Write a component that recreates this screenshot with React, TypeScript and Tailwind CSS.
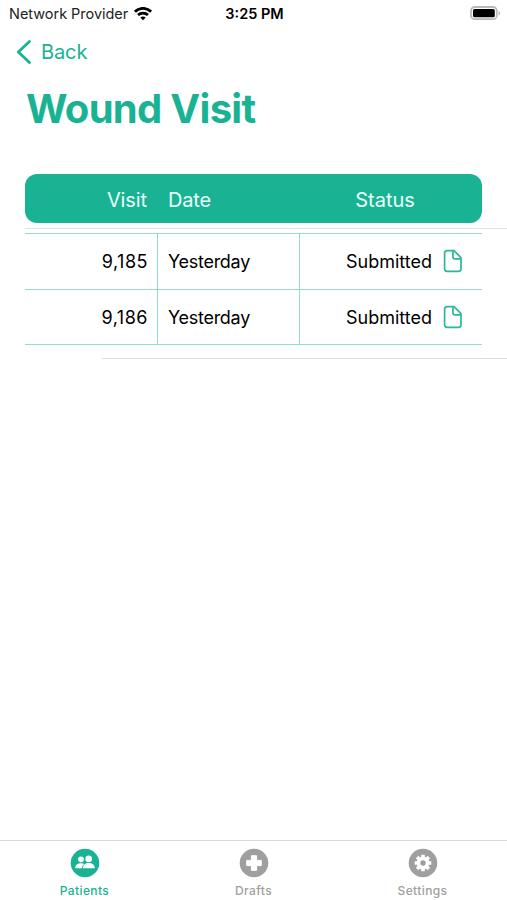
import React from "react";

const visits = [
  { id: "9,185", date: "Yesterday", status: "Submitted" },
  { id: "9,186", date: "Yesterday", status: "Submitted" },
];

function WifiIcon() {
  return (
    <svg width="18" height="14" viewBox="0 0 18 14" fill="none" stroke="#000" strokeWidth="2.8">
      <path d="M0.9 4.7C5.5 0.2 12.5 0.2 17.1 4.7" />
      <path d="M4 8.1C6.8 5.4 11.2 5.4 14 8.1" />
      <path d="M9 13.2L6.3 10.5C7.8 9.3 10.2 9.3 11.7 10.5Z" fill="#000" stroke="none" />
    </svg>
  );
}

function BatteryIcon() {
  return (
    <svg width="31" height="15" viewBox="0 0 31 15">
      <rect x="1" y="1" width="25.8" height="12.2" rx="3.8" fill="#fff" stroke="#b9b9b9" strokeWidth="1.8" />
      <rect x="3" y="2.9" width="21.8" height="8.4" rx="1.6" fill="#000" />
      <path d="M28.5 4.9C30.7 5.6 30.7 8.6 28.5 9.3Z" fill="#b9b9b9" />
    </svg>
  );
}

function DocIcon() {
  return (
    <svg width="20" height="24" viewBox="0 0 20 24" fill="none" stroke="#2bb898" strokeWidth="1.7" strokeLinejoin="round">
      <path d="M4.2 1.7H11L18 8.7V19.7Q18 22.3 15.4 22.3H4.2Q1.6 22.3 1.6 19.7V4.3Q1.6 1.7 4.2 1.7Z" />
      <path d="M9.9 1.9V7.8Q9.9 9.9 12 9.9H17.8" />
    </svg>
  );
}

function PatientsIcon() {
  return (
    <svg width="30" height="30" viewBox="0 0 30 30">
      <circle cx="15" cy="15" r="14.3" fill="#19b394" />
      <g fill="#fff">
        <circle cx="11" cy="11.3" r="2.9" />
        <path d="M5.2 20.3C5.2 16.7 7.8 15.3 11.1 15.3C12.4 15.3 13.4 15.5 14.2 16C12.6 17.2 12 18.6 12 20.3Z" />
        <circle cx="18.7" cy="10.9" r="3.3" />
        <path d="M13 20.3C13 16.7 15.5 15.1 18.8 15.1C22.2 15.1 24.7 16.7 24.7 20.3Z" />
      </g>
    </svg>
  );
}

function DraftsIcon() {
  return (
    <svg width="30" height="30" viewBox="0 0 30 30">
      <circle cx="15" cy="15" r="14.3" fill="#9f9f9f" />
      <path d="M12.4 7.7H17.6V12.4H22.3V17.6H17.6V22.3H12.4V17.6H7.7V12.4H12.4Z" fill="#fff" stroke="#fff" strokeLinejoin="round" />
    </svg>
  );
}

function SettingsIcon() {
  return (
    <svg width="30" height="30" viewBox="0 0 30 30">
      <circle cx="15" cy="15" r="14.3" fill="#9f9f9f" />
      <g stroke="#fff" strokeWidth="3.6">
        <path d="M15 6.7V23.3M6.7 15H23.3M9.1 9.1L20.9 20.9M20.9 9.1L9.1 20.9" />
      </g>
      <circle cx="15" cy="15" r="6.4" fill="#fff" />
      <circle cx="15" cy="15" r="2.7" fill="#9f9f9f" />
    </svg>
  );
}

const tabs = [
  { label: "Patients", Icon: PatientsIcon, color: "text-[#19b394]" },
  { label: "Drafts", Icon: DraftsIcon, color: "text-[#a0a0a0]" },
  { label: "Settings", Icon: SettingsIcon, color: "text-[#a0a0a0]" },
];

export default function App() {
  return (
    <div className="flex h-[900px] w-[507px] flex-col overflow-hidden bg-white font-['Inter',sans-serif] text-black">
      <header className="grid h-7 grid-cols-3 items-center pl-[9px] pr-[6px]">
        <div className="flex items-center gap-[6px] pb-px">
          <span className="whitespace-nowrap pt-px text-[14.5px] tracking-[-0.03px] text-[#222]">Network Provider</span>
          <WifiIcon />
        </div>
        <span className="pr-px text-center text-[14.5px] font-semibold">3:25 PM</span>
        <div className="flex justify-end pb-px">
          <BatteryIcon />
        </div>
      </header>

      <nav className="flex h-12 items-center pl-4 text-[#19b394]">
        <button className="flex items-center gap-[9px]">
          <svg width="16" height="26" viewBox="0 0 16 26" fill="none" stroke="currentColor" strokeWidth="2.8" strokeLinecap="round" strokeLinejoin="round">
            <path d="M13.5 2.5L2.3 13L13.5 23.5" />
          </svg>
          <span className="text-[20px] tracking-[-0.1px]">Back</span>
        </button>
      </nav>

      <main className="flex-1">
        <h1 className="h-[98px] pl-[26px] pt-2 text-[40px] leading-[50px] font-bold tracking-[-0.7px] text-[#19b394]">Wound Visit</h1>

        <div className="mx-[25px] grid h-[49px] grid-cols-[132px_143px_1fr] items-center rounded-[12px] bg-[#19b394] pt-[2px] text-[20px] text-[#e9fff9]">
          <span className="pr-[10px] text-right tracking-[-0.1px]">Visit</span>
          <span className="pl-[11px] tracking-[-0.2px]">Date</span>
          <span className="pr-[12px] text-center">Status</span>
        </div>
        <div className="mt-[5px] ml-[25px] h-px bg-[#e2e2e2]" />

        <div className="mx-[25px] mt-[4px] border-t border-[#8fe0ca]">
          {visits.map((visit) => (
            <div key={visit.id} className="grid h-[55.5px] grid-cols-[133px_142px_1fr] border-b border-[#8fe0ca] text-[18px]">
              <div className="flex items-center justify-end border-r border-[#8fe0ca] pr-[9px] pt-px tracking-[0.5px]">{visit.id}</div>
              <div className="flex items-center border-r border-[#8fe0ca] pl-[10px] pt-px tracking-[-0.28px]">{visit.date}</div>
              <div className="flex items-center justify-end gap-[11px] pr-[19px]">
                <span className="pt-px">{visit.status}</span>
                <DocIcon />
              </div>
            </div>
          ))}
        </div>
        <div className="mt-[13px] ml-[102px] h-px bg-[#dedede]" />
      </main>

      <footer className="grid h-[60px] grid-cols-3 border-t border-[#d8d8d8]">
        {tabs.map(({ label, Icon, color }) => (
          <button key={label} className={"flex flex-col items-center pt-[7px] " + color}>
            <Icon />
            <span className="mt-[5px] text-[12px] leading-4 font-medium tracking-[0.4px]">{label}</span>
          </button>
        ))}
      </footer>
    </div>
  );
}
